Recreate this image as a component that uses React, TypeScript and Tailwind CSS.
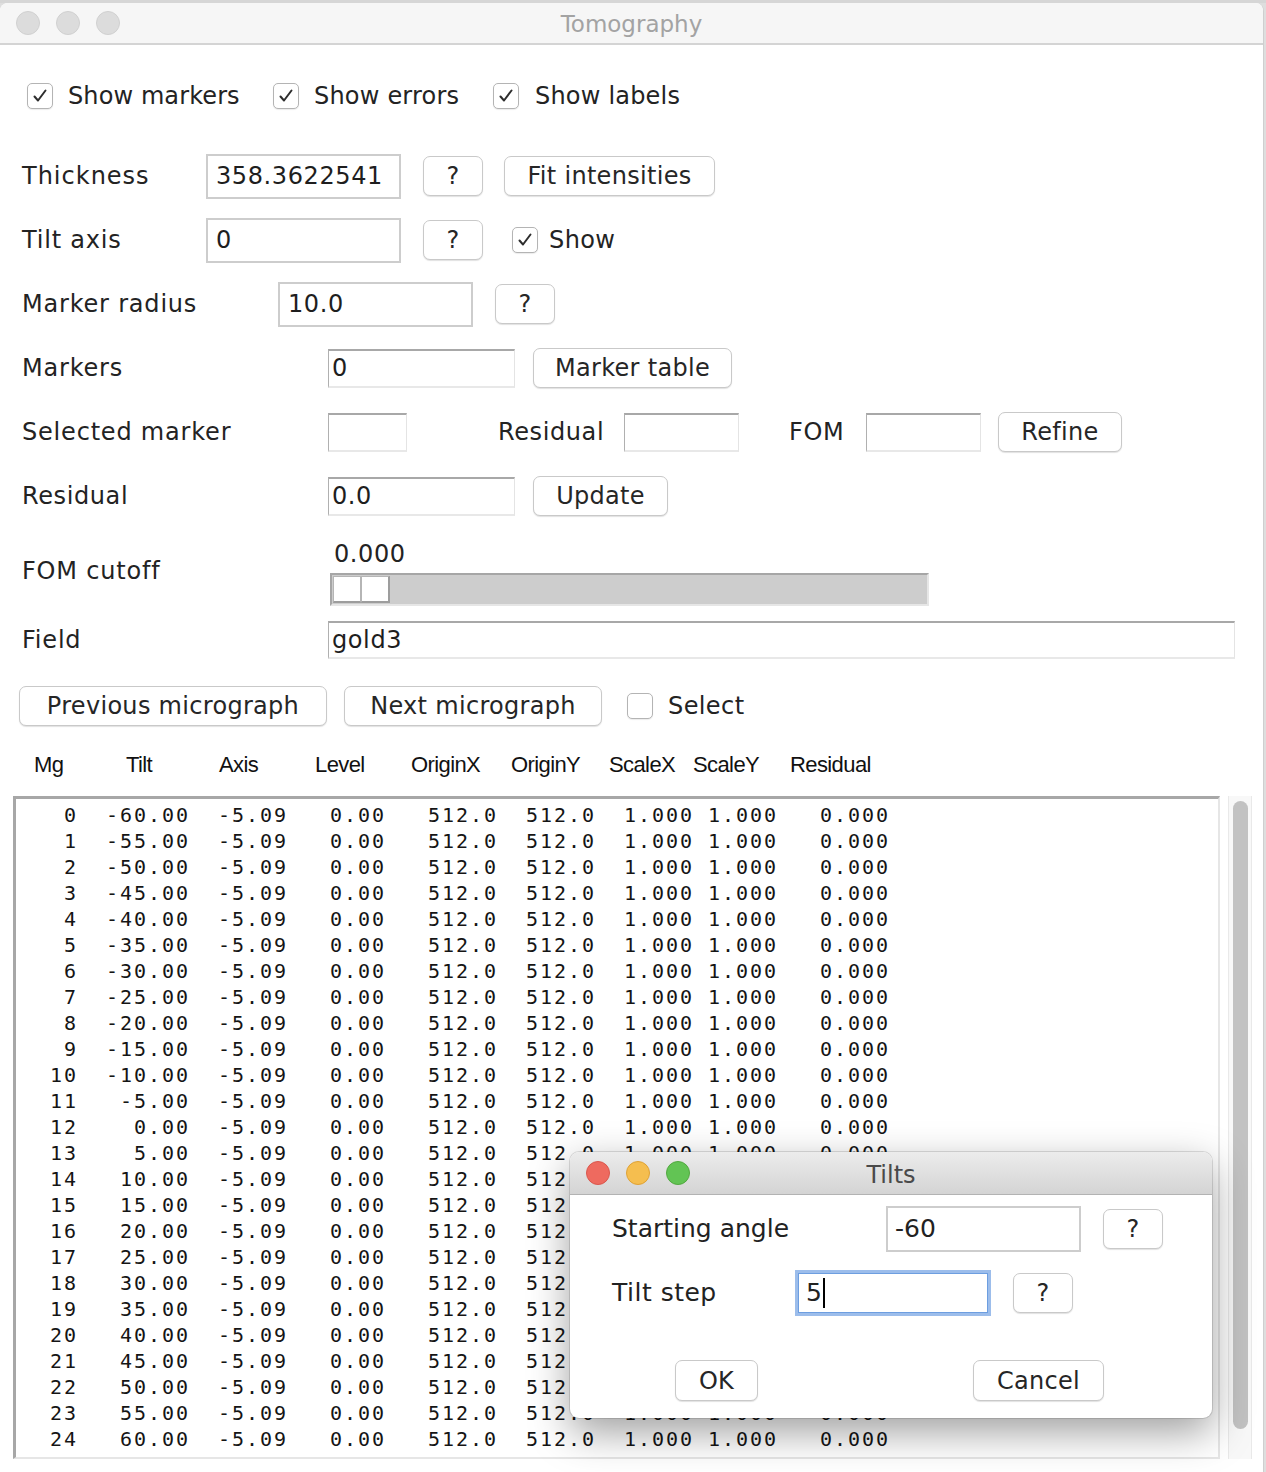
import React from "react";

const UI = { fontFamily: '"DejaVu Sans", "Noto Sans", sans-serif' };
const HDR = { fontFamily: '"Liberation Sans", Arial, sans-serif' };
const MONO = { fontFamily: '"DejaVu Sans Mono", "Liberation Mono", monospace' };

function Check({ checked = true }: { checked?: boolean }) {
  return (
    <div className="w-[26px] h-[26px] rounded-[5px] border border-[#b4b4b4] bg-white shadow-[0_1px_1px_rgba(0,0,0,0.08)] flex items-center justify-center shrink-0">
      {checked && (
        <svg width="18" height="18" viewBox="0 0 18 18">
          <path d="M3.5 9.5 L7 13.5 L14.5 3.5" fill="none" stroke="#2e2e2e" strokeWidth="2" strokeLinecap="round" strokeLinejoin="round" />
        </svg>
      )}
    </div>
  );
}

function Btn({ w, children, className = "" }: { w: string; children: React.ReactNode; className?: string }) {
  return (
    <div
      className={`${w} h-[40px] rounded-[7px] border border-[#c9c9c9] bg-white shadow-[0_1px_1px_rgba(0,0,0,0.12)] flex items-center justify-center text-[24px] tracking-[0.3px] text-[#262626] shrink-0 ${className}`}
    >
      {children}
    </div>
  );
}

function Field({ w, h = "h-[45px]", value = "", className = "" }: { w: string; h?: string; value?: string; className?: string }) {
  return (
    <div className={`${w} ${h} border-2 border-[#cdcdcd] bg-white flex items-center pl-[8px] text-[24px] tracking-[0.6px] text-[#1e1e1e] shrink-0 ${className}`}>
      {value}
    </div>
  );
}

function SunkField({ w, h = "h-[39px]", value = "", className = "" }: { w: string; h?: string; value?: string; className?: string }) {
  return (
    <div
      className={`${w} ${h} border-t-2 border-l border-t-[#a8a8a8] border-l-[#b0b0b0] border-r border-b-2 border-r-[#e4e4e4] border-b-[#e8e8e8] bg-white flex items-center pl-[3px] text-[24px] tracking-[0.6px] text-[#1e1e1e] shrink-0 ${className}`}
    >
      {value}
    </div>
  );
}

function Help({ className = "" }: { className?: string }) {
  return <Btn w="w-[60px]" className={className}>?</Btn>;
}

const rows = Array.from({ length: 25 }, (_, i) => {
  const tilt = (-60 + 5 * i).toFixed(2);
  return (
    String(i).padStart(4) +
    tilt.padStart(8) +
    "-5.09".padStart(7) +
    "0.00".padStart(7) +
    "512.0".padStart(8) +
    "512.0".padStart(7) +
    "1.000".padStart(7) +
    "1.000".padStart(6) +
    "0.000".padStart(8)
  );
});

export default function App() {
  return (
    <div className="w-[1266px] h-[1472px] relative overflow-hidden bg-[#dedede]" style={UI}>
      <div className="h-[3px] bg-[#d6d6d6]" />
      <div className="h-[1469px] bg-white rounded-t-[8px] border-r border-[#cfcfcf] mr-[2px] flex flex-col overflow-hidden">
        {/* title bar */}
        <div className="h-[42px] bg-[#f6f6f6] border-b-2 border-[#d4d4d4] relative flex items-center shrink-0">
          <div className="flex gap-[16px] pl-[16px]">
            <div className="w-[24px] h-[24px] rounded-full bg-[#dcdcdc] border border-[#d0d0d0]" />
            <div className="w-[24px] h-[24px] rounded-full bg-[#dcdcdc] border border-[#d0d0d0]" />
            <div className="w-[24px] h-[24px] rounded-full bg-[#dcdcdc] border border-[#d0d0d0]" />
          </div>
          <div className="absolute inset-0 flex items-center justify-center text-[23px] text-[#a3a3a3] pt-[3px]">Tomography</div>
        </div>

        <div className="pl-[22px] pt-[19px] text-[24px] tracking-[0.4px] text-[#232323] flex flex-col">
          {/* checkbox row */}
          <div className="h-[64px] flex items-center">
            <div className="w-[246px] ml-[5px] flex items-center gap-[15px]">
              <Check /> <span className="tracking-[0.1px]">Show markers</span>
            </div>
            <div className="w-[220px] flex items-center gap-[15px]">
              <Check /> <span className="tracking-[0.2px]">Show errors</span>
            </div>
            <div className="flex items-center gap-[16px]">
              <Check /> <span className="tracking-[0.2px]">Show labels</span>
            </div>
          </div>

          <div className="h-[16px]" />

          {/* Thickness */}
          <div className="h-[64px] flex items-center">
            <div className="w-[184px] tracking-[1px]">Thickness</div>
            <Field w="w-[195px]" value="358.3622541" />
            <Help className="ml-[22px]" />
            <Btn w="w-[211px]" className="ml-[21px]">Fit intensities</Btn>
          </div>

          {/* Tilt axis */}
          <div className="h-[64px] flex items-center">
            <div className="w-[184px] tracking-[0.8px]">Tilt axis</div>
            <Field w="w-[195px]" value="0" />
            <Help className="ml-[22px]" />
            <div className="ml-[29px] flex items-center gap-[11px]">
              <Check /> <span>Show</span>
            </div>
          </div>

          {/* Marker radius */}
          <div className="h-[64px] flex items-center">
            <div className="w-[256px] tracking-[0.8px]">Marker radius</div>
            <Field w="w-[195px]" value="10.0" />
            <Help className="ml-[22px]" />
          </div>

          {/* Markers */}
          <div className="h-[64px] flex items-center">
            <div className="w-[306px] tracking-[0.8px]">Markers</div>
            <SunkField w="w-[187px]" value="0" />
            <Btn w="w-[199px]" className="ml-[18px]">Marker table</Btn>
          </div>

          {/* Selected marker */}
          <div className="h-[64px] flex items-center">
            <div className="w-[306px] tracking-[0.8px]">Selected marker</div>
            <SunkField w="w-[79px]" />
            <div className="w-[126px] ml-[91px] tracking-[0.6px]">Residual</div>
            <SunkField w="w-[115px]" />
            <div className="w-[77px] ml-[50px] tracking-[0.6px]">FOM</div>
            <SunkField w="w-[115px]" />
            <Btn w="w-[124px]" className="ml-[17px]">Refine</Btn>
          </div>

          {/* Residual */}
          <div className="h-[64px] flex items-center">
            <div className="w-[306px] tracking-[0.6px]">Residual</div>
            <SunkField w="w-[187px]" value="0.0" />
            <Btn w="w-[135px]" className="ml-[18px]">Update</Btn>
          </div>

          {/* FOM cutoff */}
          <div className="h-[85px] flex items-center">
            <div className="w-[308px] tracking-[0.8px]">FOM cutoff</div>
            <div className="h-[85px] flex flex-col">
              <div className="mt-[12px] h-[28px] leading-[28px] pl-[4px] tracking-[0.6px]">0.000</div>
              <div className="mt-[5px] w-[599px] h-[33px] bg-[#cdcdcd] border-t-2 border-l-2 border-t-[#a6a6a6] border-l-[#a6a6a6] border-b-2 border-r-2 border-b-[#e6e6e6] border-r-[#e6e6e6] flex items-center pl-[1px]">
                <div className="w-[28px] h-[27px] bg-white border border-[#b5b5b5] border-b-2 border-b-[#9d9d9d]" />
                <div className="w-[29px] h-[27px] bg-white border border-[#b5b5b5] border-b-2 border-b-[#9d9d9d] border-r-2 border-r-[#9d9d9d]" />
              </div>
            </div>
          </div>

          {/* Field */}
          <div className="h-[54px] flex items-center">
            <div className="w-[306px] tracking-[0.8px]">Field</div>
            <SunkField w="w-[907px]" h="h-[38px]" value="gold3" />
          </div>

          {/* micrograph buttons */}
          <div className="h-[78px] flex items-center">
            <Btn w="w-[308px]" className="-ml-[3px]">Previous micrograph</Btn>
            <Btn w="w-[258px]" className="ml-[17px]">Next micrograph</Btn>
            <div className="ml-[25px] flex items-center gap-[15px]">
              <Check checked={false} /> <span>Select</span>
            </div>
          </div>

          {/* header */}
          <div className="h-[38px] flex items-center text-[22px] text-[#111] tracking-[-0.6px]" style={HDR}>
            <div className="w-[92px] ml-[12px]">Mg</div>
            <div className="w-[93px]">Tilt</div>
            <div className="w-[96px]">Axis</div>
            <div className="w-[96px]">Level</div>
            <div className="w-[100px]">OriginX</div>
            <div className="w-[98px]">OriginY</div>
            <div className="w-[84px]">ScaleX</div>
            <div className="w-[97px]">ScaleY</div>
            <div>Residual</div>
          </div>

          {/* table + scrollbar */}
          <div className="mt-[13px] flex -ml-[9px]">
            <div className="w-[1207px] h-[663px] border-t-[3px] border-l-[3px] border-[#a7a7a7] border-r-2 border-b-2 border-r-[#e6e6e6] border-b-[#e6e6e6] bg-white pt-[3px] pl-[6px] overflow-hidden">
              {rows.map((r, i) => (
                <div key={i} className="h-[26px] leading-[26px] whitespace-pre text-[20px] tracking-[1.96px] text-[#151515]" style={MONO}>
                  {r}
                </div>
              ))}
            </div>
            <div className="ml-[8px] w-[24px] h-[663px] bg-[#f8f8f8] border-l border-r border-[#e9e9e9] pt-[5px]">
              <div className="ml-[4px] w-[15px] h-[628px] rounded-full bg-[#c2c2c2]" />
            </div>
          </div>
        </div>
      </div>

      {/* Tilts dialog */}
      <div className="absolute left-[570px] top-[1152px] w-[642px] h-[266px] rounded-[9px] bg-white shadow-[0_14px_40px_rgba(0,0,0,0.38),0_0_0_1px_rgba(0,0,0,0.12)] overflow-hidden flex flex-col text-[25px] text-[#222]">
        <div className="h-[43px] bg-gradient-to-b from-[#ececec] to-[#d4d4d4] border-b border-[#b3b3b3] relative flex items-center shrink-0">
          <div className="flex gap-[16px] pl-[16px]">
            <div className="w-[24px] h-[24px] rounded-full bg-[#ee6a5f] border border-[#d9574d]" />
            <div className="w-[24px] h-[24px] rounded-full bg-[#f5be4f] border border-[#dea236]" />
            <div className="w-[24px] h-[24px] rounded-full bg-[#62c454] border border-[#52a840]" />
          </div>
          <div className="absolute inset-0 flex items-center justify-center text-[24px] text-[#4a4a4a] pt-[3px]">Tilts</div>
        </div>
        <div className="pl-[42px] pt-[2px] flex flex-col">
          <div className="h-[64px] flex items-center">
            <div className="w-[274px]">Starting angle</div>
            <div className="w-[195px] h-[46px] border-2 border-[#cdcdcd] flex items-center pl-[7px] text-[25px]">-60</div>
            <Help className="ml-[22px]" />
          </div>
          <div className="h-[64px] flex items-center">
            <div className="w-[183px] tracking-[0.5px]">Tilt step</div>
            <div className="w-[196px] h-[46px] border-[3px] border-[#9cbdeb] flex items-center pl-[8px] text-[25px] shadow-[inset_0_0_0_1px_#6d9ee0]">
              5<span className="w-[2px] h-[30px] bg-black ml-[1px]" />
            </div>
            <Help className="ml-[22px]" />
          </div>
          <div className="mt-[35px] flex items-center">
            <Btn w="w-[83px]" className="ml-[63px] h-[41px]">OK</Btn>
            <Btn w="w-[131px]" className="ml-[215px] h-[41px]">Cancel</Btn>
          </div>
        </div>
      </div>
    </div>
  );
}
